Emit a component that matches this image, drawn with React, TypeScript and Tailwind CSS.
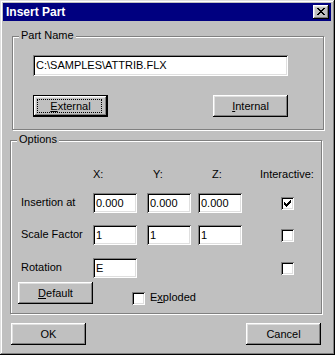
const RAISED =
  "shadow-[inset_-1px_-1px_#000,inset_1px_1px_#fff,inset_-2px_-2px_#808080,inset_2px_2px_#dfdfdf]";
const SUNKEN =
  "shadow-[inset_1px_1px_#808080,inset_-1px_-1px_#fff,inset_2px_2px_#000,inset_-2px_-2px_#dfdfdf]";

function Button({
  children,
  isDefault = false,
  className = "",
}: {
  children: React.ReactNode;
  isDefault?: boolean;
  className?: string;
}) {
  if (isDefault) {
    return (
      <button className={`relative w-[75px] h-[22px] border border-black bg-[#c0c0c0] text-black text-[11px] leading-[13px] ${className}`}>
        <span className={`absolute inset-0 ${RAISED}`} />
        <span className="absolute left-[3px] right-[5px] top-[3px] bottom-[3px] border border-dotted border-black" />
        <span className="relative">{children}</span>
      </button>
    );
  }
  return (
    <button className={`w-[75px] h-[22px] bg-[#c0c0c0] text-black text-[11px] leading-[13px] ${RAISED} ${className}`}>
      {children}
    </button>
  );
}

function Field({ value, className = "" }: { value: string; className?: string }) {
  return (
    <div className={`bg-white flex items-center pl-[3px] text-[11px] leading-[13px] text-black ${SUNKEN} ${className}`}>
      {value}
    </div>
  );
}

function Check({ checked = false, className = "" }: { checked?: boolean; className?: string }) {
  return (
    <div className={`w-[13px] h-[13px] bg-white flex items-center justify-center ${SUNKEN} ${className}`}>
      {checked && (
        <svg width="7" height="7" viewBox="0 0 7 7" shapeRendering="crispEdges">
          <path
            fill="#000"
            d="M6 0h1v1h-1z M5 1h2v1h-2z M0 2h1v1h-1z M4 2h3v1h-3z M0 3h2v1h-2z M3 3h3v1h-3z M0 4h5v1h-5z M1 5h3v1h-3z M2 6h1v1h-1z"
          />
        </svg>
      )}
    </div>
  );
}

function Group({
  label,
  className = "",
  children,
}: {
  label: string;
  className?: string;
  children: React.ReactNode;
}) {
  return (
    <div className={`relative w-[312px] border border-[#808080] shadow-[inset_1px_1px_#fff,1px_1px_#fff] ${className}`}>
      <span className="absolute left-[6px] top-[-8px] px-[2px] bg-[#c0c0c0] text-[11px] leading-[13px] text-black">
        {label}
      </span>
      {children}
    </div>
  );
}

function Row({ label, values, checked = false, className = "" }: { label: string; values: string[]; checked?: boolean; className?: string }) {
  return (
    <div className={`flex items-center h-[20px] ${className}`}>
      <span className="w-[75px] pl-[3px] text-[11px] leading-[13px] -mt-[2px]">{label}</span>
      <Field value={values[0]} className="w-[44px] h-[20px]" />
      {values.length > 1 && (
        <>
          <Field value={values[1]} className="w-[44px] h-[20px] ml-[10px]" />
          <Field value={values[2]} className="w-[44px] h-[20px] ml-[7px]" />
          <Check checked={checked} className="ml-[39px]" />
        </>
      )}
      {values.length === 1 && <Check checked={checked} className="ml-[144px]" />}
    </div>
  );
}

export default function App() {
  return (
    <div className="w-[335px] h-[355px] bg-[#c0c0c0] pt-[3px] pl-[3px] pr-[4px] text-black font-[Liberation_Sans,Arial,sans-serif] shadow-[inset_-1px_-1px_#000,inset_1px_1px_#dfdfdf,inset_-2px_-2px_#808080,inset_2px_2px_#fff]">
      {/* TITLE */}
      <div className="h-[18px] bg-[#000080] flex items-center justify-between pl-[3px] pr-[2px]">
        <span className="text-white font-bold text-[12px] leading-[18px]">Insert Part</span>
        <div className={`w-[16px] h-[14px] bg-[#c0c0c0] pl-[4px] pt-[3px] ${RAISED}`}>
          <svg width="8" height="7" viewBox="0 0 8 7" shapeRendering="crispEdges" className="block">
            <path
              fill="#000"
              d="M0 0h2v1H0z M6 0h2v1H6z M1 1h2v1H1z M5 1h2v1H5z M2 2h4v1H2z M3 3h2v1H3z M2 4h4v1H2z M1 5h2v1H1z M5 5h2v1H5z M0 6h2v1H0z M6 6h2v1H6z"
            />
          </svg>
        </div>
      </div>

      {/* PART NAME */}
      <Group label="Part Name" className="ml-[9px] mt-[15px] h-[94px] pl-[20px] pt-[18px]">
        <Field value="C:\SAMPLES\ATTRIB.FLX" className="w-[255px] h-[21px]" />
        <div className="mt-[19px] w-[255px] flex justify-between">
          <Button isDefault>
            <span className="underline">E</span>xternal
          </Button>
          <Button>
            <span className="underline">I</span>nternal
          </Button>
        </div>
      </Group>

      {/* OPTIONS */}
      <Group label="Options" className="ml-[7px] mt-[10px] h-[174px] pl-[7px] pt-[27px]">
        <div className="flex h-[13px] text-[11px] leading-[13px]">
          <span className="w-[75px]" />
          <span className="w-[60px]">X:</span>
          <span className="w-[59px]">Y:</span>
          <span className="w-[48px]">Z:</span>
          <span>Interactive:</span>
        </div>
        <Row label="Insertion at" values={["0.000", "0.000", "0.000"]} checked className="mt-[12px]" />
        <Row label="Scale Factor" values={["1", "1", "1"]} className="mt-[12px]" />
        <Row label="Rotation" values={["E"]} className="mt-[13px]" />
        <div className="flex items-start mt-[4px]">
          <Button>
            <span className="underline">D</span>efault
          </Button>
          <Check className="ml-[39px] mt-[10px]" />
          <span className="ml-[5px] mt-[9px] text-[11px] leading-[13px]">
            E<span className="underline">x</span>ploded
          </span>
        </div>
      </Group>

      {/* BOTONES */}
      <div className="ml-[8px] mt-[9px] w-[310px] flex justify-between">
        <Button>OK</Button>
        <Button>Cancel</Button>
      </div>
    </div>
  );
}
